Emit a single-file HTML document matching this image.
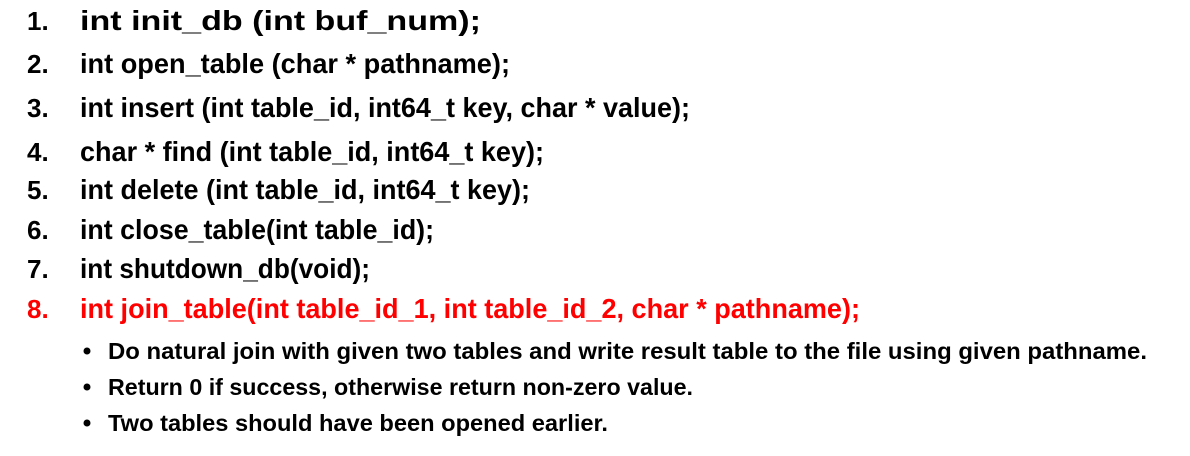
<!DOCTYPE html>
<html><head><meta charset="utf-8"><style>
html,body{margin:0;padding:0;background:#fff;}
svg{display:block;}
text{font-family:"Liberation Sans",Arial,sans-serif;font-weight:bold;}
</style></head><body>
<svg width="1190" height="456" xmlns="http://www.w3.org/2000/svg">
<g font-size="28" fill="#000">
<text x="27" y="30" font-size="26">1.</text>
<text x="80" y="30" textLength="401" lengthAdjust="spacingAndGlyphs">int init_db (int buf_num);</text>
<text x="27" y="73" font-size="26">2.</text>
<text x="80" y="73" textLength="430" lengthAdjust="spacingAndGlyphs">int open_table (char * pathname);</text>
<text x="27" y="117" font-size="26">3.</text>
<text x="80" y="117" textLength="610" lengthAdjust="spacingAndGlyphs">int insert (int table_id, int64_t key, char * value);</text>
<text x="27" y="161" font-size="26">4.</text>
<text x="80" y="161" textLength="464" lengthAdjust="spacingAndGlyphs">char * find (int table_id, int64_t key);</text>
<text x="27" y="199" font-size="26">5.</text>
<text x="80" y="199" textLength="450" lengthAdjust="spacingAndGlyphs">int delete (int table_id, int64_t key);</text>
<text x="27" y="239" font-size="26">6.</text>
<text x="80" y="239" textLength="354" lengthAdjust="spacingAndGlyphs">int close_table(int table_id);</text>
<text x="27" y="278" font-size="26">7.</text>
<text x="80" y="278" textLength="290" lengthAdjust="spacingAndGlyphs">int shutdown_db(void);</text>
</g>
<g font-size="28" fill="#ff0000">
<text x="27" y="318" font-size="26">8.</text>
<text x="80" y="318" textLength="780" lengthAdjust="spacingAndGlyphs">int join_table(int table_id_1, int table_id_2, char * pathname);</text>
</g>
<g font-size="23" fill="#000">
<circle cx="87" cy="351" r="3.5"/>
<text x="108" y="359" textLength="1039" lengthAdjust="spacingAndGlyphs">Do natural join with given two tables and write result table to the file using given pathname.</text>
<circle cx="87" cy="387" r="3.5"/>
<text x="108" y="395" textLength="585" lengthAdjust="spacingAndGlyphs">Return 0 if success, otherwise return non-zero value.</text>
<circle cx="87" cy="423" r="3.5"/>
<text x="108" y="431" textLength="500" lengthAdjust="spacingAndGlyphs">Two tables should have been opened earlier.</text>
</g>
</svg>
</body></html>
